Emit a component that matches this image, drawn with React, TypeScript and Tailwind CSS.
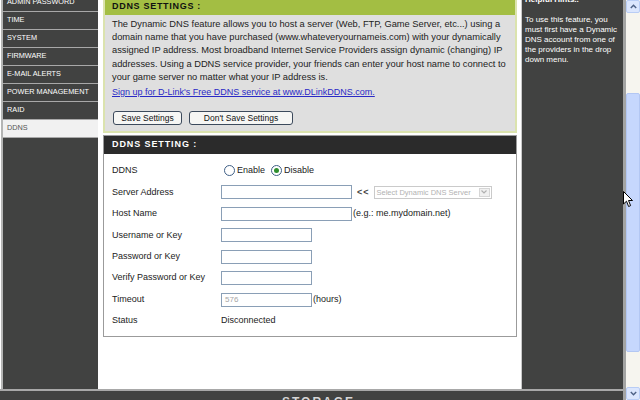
import React from "react";

const navItems = [
  "ADMIN PASSWORD",
  "TIME",
  "SYSTEM",
  "FIRMWARE",
  "E-MAIL ALERTS",
  "POWER MANAGEMENT",
  "RAID",
  "DDNS",
];

function TextBox({ w, value }: { w: string; value?: string }) {
  return (
    <div
      className={`${w} h-[14px] border border-[#8a9fb6] bg-white pl-[3px] text-[8px] leading-[12px] text-[#a6a6a6]`}
    >
      {value}
    </div>
  );
}

function Radio({ checked }: { checked?: boolean }) {
  return (
    <span className="inline-flex h-[11px] w-[11px] items-center justify-center rounded-full border border-[#3f5f86] bg-white">
      {checked && <span className="h-[5px] w-[5px] rounded-full bg-[#2f8f2f]" />}
    </span>
  );
}

function FormRow({ label, children }: { label: string; children?: React.ReactNode }) {
  return (
    <div className="flex h-[21.45px] items-center">
      <div className="w-[109px] shrink-0">{label}</div>
      <div className="flex items-center">{children}</div>
    </div>
  );
}

export default function App() {
  return (
    <div
      className="relative grid h-[400px] w-[640px] grid-cols-[626px_14px] overflow-hidden bg-[#414241] text-[9px] text-[#222]"
      style={{ fontFamily: '"Liberation Sans", Arial, sans-serif' }}
    >
      <div className="grid h-[400px] grid-rows-[389px_11px] border-r-[3px] border-[#a3a4a3]">
        <div className="grid grid-cols-[98px_423px_1fr] bg-white">
          {/* left navigation */}
          <nav className="ml-[1px] overflow-hidden border-l-2 border-[#b4b5b4] bg-[#414241]">
            <ul className="-mt-[6px]">
              {navItems.map((item) => {
                const active = item === "DDNS";
                return (
                  <li
                    key={item}
                    className={`flex h-[18px] items-center border-b border-[#a8a8a8] pl-[4px] text-[7.3px] ${
                      active ? "bg-[#f1f1f1] text-[#555]" : "text-white"
                    }`}
                  >
                    {item}
                  </li>
                );
              })}
            </ul>
          </nav>

          {/* main content */}
          <div className="overflow-hidden bg-white pl-[5px] pr-[4px]">
            <section className="-mt-[2px] border-2 border-t-0 border-[#dbe3ae] bg-[#dfdfdf]">
              <div className="flex h-[17px] items-center bg-[#a3be43] pl-[7px] pt-[1px] font-bold tracking-[0.7px] text-[#111]">
                DDNS SETTINGS :
              </div>
              <div className="px-[7px] pb-[6px] pt-[3px] leading-[13.2px] text-[#222]">
                <p className="text-[9.3px]">
                  The Dynamic DNS feature allows you to host a server (Web, FTP, Game Server, etc...) using a
                  domain name that you have purchased (www.whateveryournameis.com) with your dynamically
                  assigned IP address. Most broadband Internet Service Providers assign dynamic (changing) IP
                  addresses. Using a DDNS service provider, your friends can enter your host name to connect to
                  your game server no matter what your IP address is.
                </p>
                <p className="mt-[2px] text-[#2a2ac6] underline">
                  Sign up for D-Link's Free DDNS service at www.DLinkDDNS.com.
                </p>
                <div className="mt-[12px] flex gap-[7px] pl-[1px]">
                  <button className="h-[14px] w-[69px] rounded-[3px] border border-[#3c4a5c] bg-[#f6f6f4] text-[8.5px] leading-[12px] text-[#111]">
                    Save Settings
                  </button>
                  <button className="h-[14px] w-[104px] rounded-[3px] border border-[#3c4a5c] bg-[#f6f6f4] text-[8.5px] leading-[12px] text-[#111]">
                    Don't Save Settings
                  </button>
                </div>
              </div>
            </section>

            <section className="mt-[2px] border border-[#9b9b9b] bg-white">
              <div className="flex h-[18px] items-center bg-[#2b2b2b] pl-[8px] font-bold tracking-[0.9px] text-white">
                DDNS SETTING :
              </div>
              <div className="pb-[4px] pl-[8px] pt-[6px] text-[#222]">
                <FormRow label="DDNS">
                  <span className="ml-[3px] flex items-center gap-[2px]">
                    <Radio />
                    <span>Enable</span>
                  </span>
                  <span className="ml-[6px] flex items-center gap-[2px]">
                    <Radio checked />
                    <span>Disable</span>
                  </span>
                </FormRow>
                <FormRow label="Server Address">
                  <TextBox w="w-[131px]" />
                  <span className="ml-[5px] mr-[4px] font-bold tracking-[1px] text-[#444]">&lt;&lt;</span>
                  <div className="flex h-[13px] w-[118px] items-center justify-between border border-[#cacaca] bg-white pl-[2px] text-[7.5px] text-[#b2b2b2]">
                    <span>Select Dynamic DNS Server</span>
                    <span className="mr-[1px] flex h-[9px] w-[11px] items-center justify-center border border-[#d6d6d6] bg-[#f0f0f0]">
                      <svg width="6" height="4" viewBox="0 0 6 4">
                        <path d="M0.5 0.5 L3 3 L5.5 0.5" fill="none" stroke="#b0b0b0" strokeWidth="1.2" />
                      </svg>
                    </span>
                  </div>
                </FormRow>
                <FormRow label="Host Name">
                  <TextBox w="w-[131px]" />
                  <span className="ml-[1px]">(e.g.: me.mydomain.net)</span>
                </FormRow>
                <FormRow label="Username or Key">
                  <TextBox w="w-[91px]" />
                </FormRow>
                <FormRow label="Password or Key">
                  <TextBox w="w-[91px]" />
                </FormRow>
                <FormRow label="Verify Password or Key">
                  <TextBox w="w-[91px]" />
                </FormRow>
                <FormRow label="Timeout">
                  <TextBox w="w-[91px]" value="576" />
                  <span className="ml-[1px]">(hours)</span>
                </FormRow>
                <FormRow label="Status">
                  <span>Disconnected</span>
                </FormRow>
              </div>
            </section>
          </div>

          {/* helpful hints */}
          <aside className="border-l border-[#c9c9c9] bg-[#414241] pl-[3px] pr-[2px] text-[8px] leading-[10px] text-white">
            <div className="-mt-[5px] font-bold">Helpful Hints..</div>
            <p className="mt-[10px]">
              To use this feature, you must first have a Dynamic DNS account from one of the providers in the drop
              down menu.
            </p>
          </aside>
        </div>

        {/* footer */}
        <footer className="flex justify-center overflow-hidden border-t-2 border-[#a8a8a8] bg-[#414241] pl-[14px]">
          <span className="mt-[5px] text-[12px] font-bold leading-[12px] tracking-[2px] text-[#d6d6d6]">
            STORAGE
          </span>
        </footer>
      </div>

      {/* window scrollbar */}
      <div className="flex h-[400px] flex-col bg-[#f6f5ef]">
        <div className="flex h-[13px] items-center justify-center rounded-[2px] border border-[#b9cdf5] bg-[#dbe6fd]">
          <svg width="7" height="5" viewBox="0 0 7 5">
            <path d="M0.8 4 L3.5 1.2 L6.2 4" fill="none" stroke="#4d6185" strokeWidth="1.4" />
          </svg>
        </div>
        <div className="h-[80px]" />
        <div className="h-[259px] rounded-[2px] border border-[#b3c7f3] bg-[#c6d7fd]" />
        <div className="flex-1" />
        <div className="flex h-[13px] items-center justify-center rounded-[2px] border border-[#b9cdf5] bg-[#dbe6fd]">
          <svg width="7" height="5" viewBox="0 0 7 5">
            <path d="M0.8 1 L3.5 3.8 L6.2 1" fill="none" stroke="#4d6185" strokeWidth="1.4" />
          </svg>
        </div>
      </div>

      {/* mouse pointer */}
      <svg className="absolute left-[623px] top-[191px]" width="11" height="17" viewBox="0 0 11 17">
        <path d="M0.5 0.5 L0.5 13 L3.5 10.2 L5.6 15.5 L7.6 14.6 L5.5 9.5 L9.5 9.5 Z" fill="#fff" stroke="#000" strokeWidth="1" />
      </svg>
    </div>
  );
}
